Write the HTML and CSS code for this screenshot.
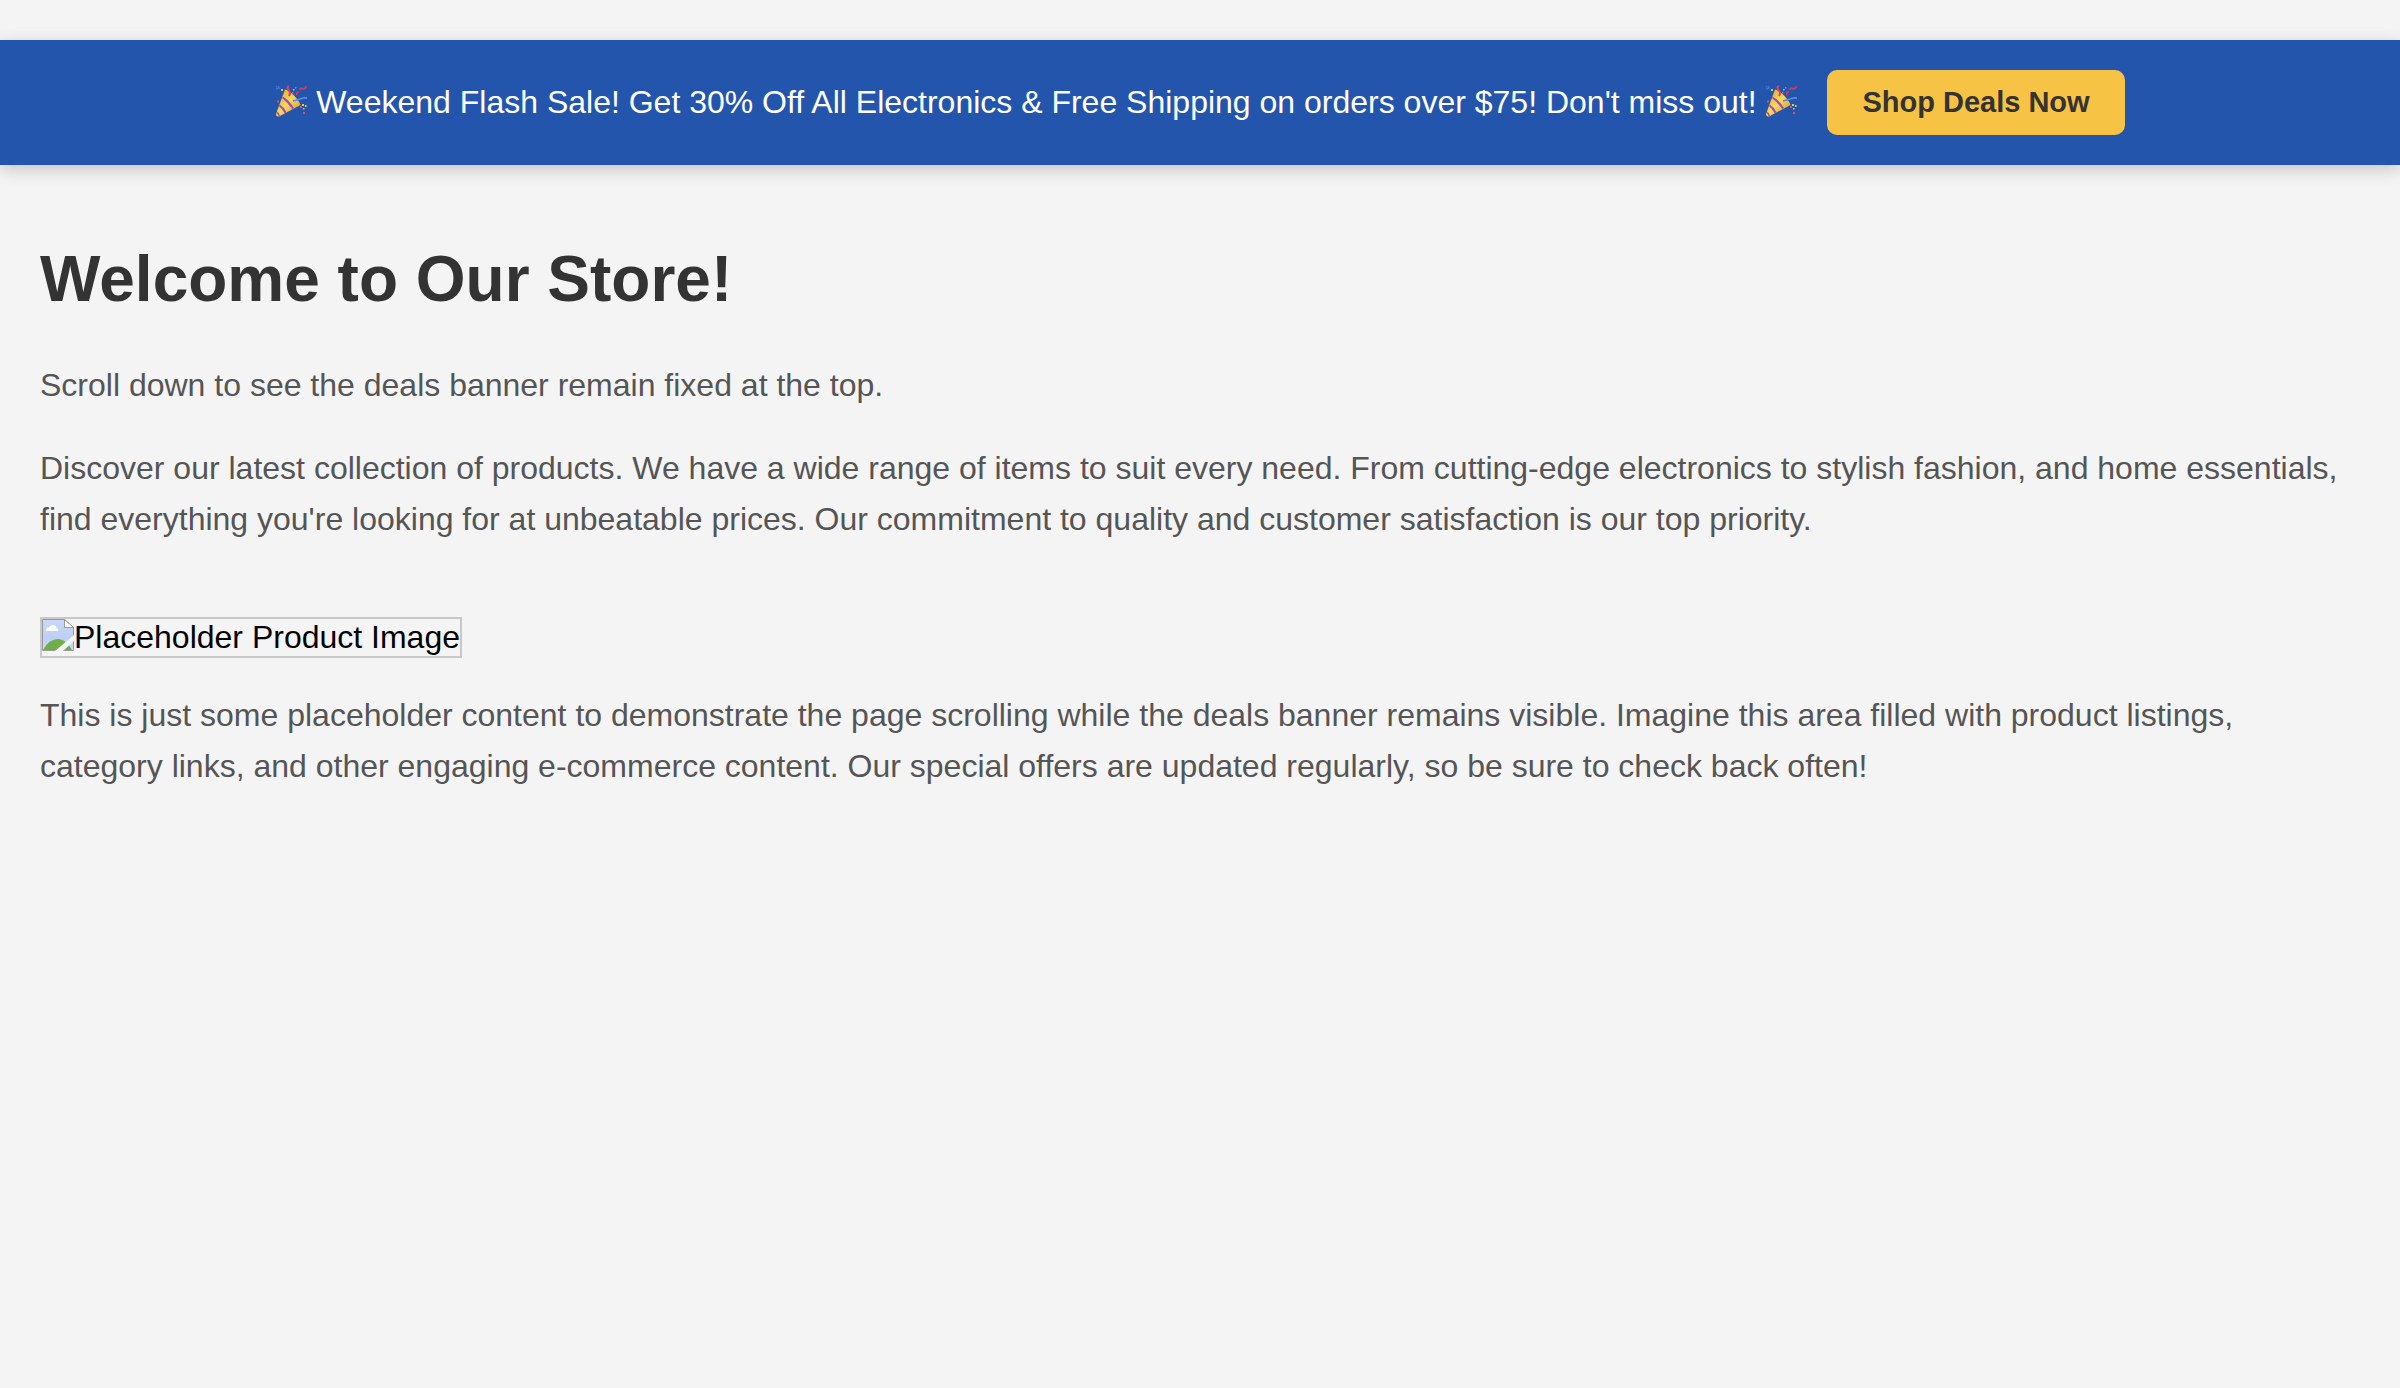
FILE: index.html
```html
<!DOCTYPE html>
<html lang="en">
<head>
<meta charset="utf-8">
<meta name="viewport" content="width=device-width, initial-scale=1">
<title>Our Store</title>
<link rel="stylesheet" href="styles.css">
</head>
<body>
<svg class="symbols" aria-hidden="true">
  <symbol id="party" viewBox="0 0 32 32">
    <defs>
      <linearGradient id="gold" x1="0" y1="0" x2="1" y2="1">
        <stop offset="0" stop-color="#d9a322"/>
        <stop offset=".5" stop-color="#f7d95c"/>
        <stop offset="1" stop-color="#c98d22"/>
      </linearGradient>
    </defs>
    <path d="M10 4.500Q13 5 19 10.500Q25 17 25.500 20L4 31.500Q1 32 1 29Z" fill="url(#gold)"/>
    <path d="M7.600 11.500Q14 15 19 23L17.300 24Q12 17 7 13Z" fill="#a346c4"/>
    <path d="M4.700 19.500Q9.500 22.500 11.500 27.300L9.800 28.300Q7.500 24 4 21.300Z" fill="#a346c4"/>
    <path d="M2 26.500Q4.500 27.500 5 31L3.700 31.500Q3.200 29.200 1.500 28Z" fill="#a346c4"/>
    <path d="M14 11Q16 8 14 5.500Q11 2 14 1" fill="none" stroke="#db4260" stroke-width="2"/>
    <path d="M22 10Q21 7 24 7M25 5Q25 2 28 4Q31 4 31.500 1" fill="none" stroke="#d43c5d" stroke-width="1.700"/>
    <path d="M18 16Q22 15 25 14Q29 12.500 32 13" fill="none" stroke="#5588e8" stroke-width="1.800"/>
    <path d="M1 4L4 3M3 1L5 4M1 1.500L2 2" stroke="#3b70db" stroke-width="1.500"/>
    <path d="M6 4h2v2H6zM18 4h1.500v1.500H18zM27 19h2v2h-2zM30 20h1.500v2H30zM28 23h1.500v1.500H28z" fill="#f5c532"/>
    <path d="M2 15.500h2v2H2zM25 21h2v2h-2zM28 27h2v2h-2z" fill="#e14b73"/>
    <path d="M20 2h1.500v1.500H20zM17 7h1.500v1.500H17z" fill="#5f92ec"/>
  </symbol>
</svg>

<aside class="banner" aria-label="Deals">
  <span class="message"><svg class="emoji" role="img" aria-label="Party popper"><use href="#party"/></svg> Weekend Flash Sale! Get 30% Off All Electronics &amp; Free Shipping on orders over $75! Don't miss out! <svg class="emoji" role="img" aria-label="Party popper"><use href="#party"/></svg></span>
  <a class="deals" href="#deals">Shop Deals Now</a>
</aside>

<main class="content" id="deals">
  <h1>Welcome to Our Store!</h1>
  <p>Scroll down to see the deals banner remain fixed at the top.</p>
  <p>Discover our latest collection of products. We have a wide range of items to suit every need. From cutting-edge electronics to stylish fashion, and home essentials, find everything you're looking for at unbeatable prices. Our commitment to quality and customer satisfaction is our top priority.</p>
  <div class="product">
    <svg class="missing" viewBox="0 0 32 32" aria-hidden="true">
      <defs>
        <linearGradient id="sky" x1="0" y1="0" x2="0" y2="1">
          <stop offset="0" stop-color="#c9d8f8"/>
          <stop offset=".6" stop-color="#bdcff4"/>
          <stop offset="1" stop-color="#cbdaf8"/>
        </linearGradient>
      </defs>
      <path d="M.500.500H22.500L31.500 8.500V31.500H.500Z" fill="url(#sky)" stroke="#999"/>
      <path d="M4 12Q3.500 8.500 7 8.500Q8 5.500 11 6Q14 6 14.500 9Q17 9.500 16 12Z" fill="#fff"/>
      <path d="M1 31Q7 20 16 20Q24 20 30 31Z" fill="#70ad47"/>
      <path d="M22.500 .500V8.500H31.500Z" fill="#fff" stroke="#999"/>
      <path d="M32 16V22L21 32H13Z" fill="#f4f4f4"/>
    </svg>
    <span>Placeholder Product Image</span>
  </div>
  <p>This is just some placeholder content to demonstrate the page scrolling while the deals banner remains visible. Imagine this area filled with product listings, category links, and other engaging e-commerce content. Our special offers are updated regularly, so be sure to check back often!</p>
</main>
</body>
</html>
```
FILE: styles.css
```css
* {
  box-sizing: border-box;
}

body {
  margin: 0;
  padding-top: 40px;
  background: #f4f4f4;
  color: #000;
  font-family: "Liberation Sans", Arial, sans-serif;
  font-size: 32px;
}

.symbols {
  position: absolute;
  width: 0;
  height: 0;
}

.banner {
  position: sticky;
  top: 0;
  display: flex;
  flex-wrap: wrap;
  align-items: center;
  justify-content: center;
  gap: 30px;
  padding: 30px 40px;
  background: #2455ac;
  color: #fff;
  box-shadow: 0 4px 16px rgba(0, 0, 0, 0.2);
}

.emoji {
  width: 32px;
  height: 32px;
  vertical-align: -4px;
}

.deals {
  padding: 16px 35px;
  border-radius: 10px;
  background: #f7c344;
  color: #333;
  font-size: 29px;
  font-weight: bold;
  line-height: 33px;
  text-decoration: none;
}

.content {
  padding: 40px;
}

h1 {
  margin: 38px 0 44px;
  color: #333;
  font-size: 64px;
  line-height: 73px;
}

p {
  margin: 0 0 32px;
  color: #555;
  line-height: 51px;
}

.product {
  display: flex;
  align-items: flex-start;
  width: fit-content;
  margin: 72px 0 32px;
  border: 2px solid #c8c8c8;
  line-height: 37px;
}

.missing {
  width: 32px;
  height: 32px;
}
```
